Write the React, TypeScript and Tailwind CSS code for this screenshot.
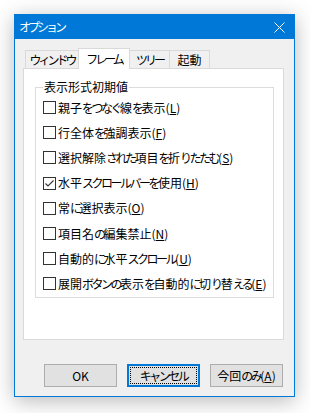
import React from "react";

type Option = {
  label: string;
  key: string;
  checked?: boolean;
};

const options: Option[] = [
  { label: "親子をつなぐ線を表示", key: "L" },
  { label: "行全体を強調表示", key: "F" },
  { label: "選択解除された項目を折りたたむ", key: "S" },
  { label: "水平スクロールバーを使用", key: "H", checked: true },
  { label: "常に選択表示", key: "O" },
  { label: "項目名の編集禁止", key: "N" },
  { label: "自動的に水平スクロール", key: "U" },
  { label: "展開ボタンの表示を自動的に切り替える", key: "E" },
];

const tabs = [
  { label: "ウィンドウ", w: "w-[54px]" },
  { label: "フレーム", w: "w-[52px]", active: true },
  { label: "ツリー", w: "w-[41px]" },
  { label: "起動", w: "w-[41px]" },
];

// kana are narrower in the UI font of the screenshot, squeeze them a bit
function Jp({ text, tight }: { text: string; tight?: boolean }) {
  const parts = text.split(/([\u3040-\u30ff]+)/);
  return (
    <>
      {parts.map((p, i) =>
        /[\u3040-\u30ff]/.test(p) ? (
          <span key={i} className={tight ? "tracking-[-3px]" : "tracking-[-2.5px]"}>
            {p}
          </span>
        ) : (
          <React.Fragment key={i}>{p}</React.Fragment>
        )
      )}
    </>
  );
}

function CheckBox({ checked }: { checked?: boolean }) {
  return (
    <span className="flex h-[13px] w-[13px] shrink-0 items-center justify-center border border-[#333333] bg-white">
      {checked && (
        <svg width="11" height="11" viewBox="0 0 11 11">
          <polyline points="1.5,5.5 4,8 9.5,2.5" fill="none" stroke="#3a3a3a" strokeWidth="1.2" />
        </svg>
      )}
    </span>
  );
}

function Row({ opt }: { opt: Option }) {
  return (
    <div className="flex h-[25.2px] items-center gap-[2px]">
      <CheckBox checked={opt.checked} />
      <span className="whitespace-nowrap leading-[16px]">
        <Jp text={opt.label} />(<span className="underline underline-offset-1">{opt.key}</span>)
      </span>
    </div>
  );
}

function Tabs() {
  return (
    <div className="flex h-[20px] items-end pl-[2px]">
      {tabs.map((t, i) =>
        t.active ? (
          <div
            key={i}
            className={`${t.w} relative z-10 -mb-px -ml-px flex h-[21px] items-center justify-center whitespace-nowrap border border-b-0 border-[#d9d9d9] bg-white`}
          >
            <span>
              <Jp text={t.label} tight />
            </span>
          </div>
        ) : (
          <div
            key={i}
            className={`${t.w} -ml-px flex h-[18px] items-center justify-center whitespace-nowrap border border-b-0 border-[#d9d9d9] bg-[#f0f0f0] first:ml-0`}
          >
            <span>
              <Jp text={t.label} tight />
            </span>
          </div>
        )
      )}
    </div>
  );
}

function Button({ children, primary }: { children: React.ReactNode; primary?: boolean }) {
  if (primary) {
    return (
      <button className="flex h-[23px] w-[73px] items-center justify-center border-2 border-[#0078d7] bg-[#e1e1e1] p-px">
        <span className="flex h-full w-full items-center justify-center outline-1 outline-dotted outline-black -outline-offset-1">
          <span>{children}</span>
        </span>
      </button>
    );
  }
  return (
    <button className="flex h-[23px] w-[73px] items-center justify-center border border-[#adadad] bg-[#e1e1e1]">
      <span>{children}</span>
    </button>
  );
}

export default function App() {
  return (
    <div
      className="h-[413px] w-[310px] overflow-hidden bg-white pl-[14px] pt-[14px] text-[12px] text-black"
      style={{ fontFamily: '"Noto Sans CJK JP", "Noto Sans", sans-serif' }}
    >
      <div className="flex h-[383px] w-[281px] flex-col border border-[#0078d7] bg-[#f0f0f0] shadow-[0_4px_20px_rgba(0,0,0,0.28)]">
        <div className="flex h-[24px] shrink-0 items-center justify-between bg-[#0078d7] pl-[4px] pr-[9px] text-white">
          <span className="leading-[16px]">
            <Jp text="オプション" tight />
          </span>
          <svg width="11" height="11" viewBox="0 0 11 11" className="mt-[1px]">
            <path d="M0.5 0.5 L10.5 10.5 M10.5 0.5 L0.5 10.5" stroke="white" strokeWidth="1" />
          </svg>
        </div>

        <div className="flex flex-1 flex-col pl-[8px] pr-[10px] pt-[9px]">
          <Tabs />
          <div className="h-[272px] border border-[#d9d9d9] bg-white pt-[10px]">
            <fieldset className="ml-[11px] w-[239px] border border-[#dcdcdc] pb-0 pl-[7px]">
              <legend className="px-px leading-[16px]">表示形式初期値</legend>
              {options.map((o, i) => (
                <Row key={i} opt={o} />
              ))}
            </fieldset>
          </div>

          <div className="mt-[24px] flex justify-end gap-[10px] pr-px">
            <Button>OK</Button>
            <Button primary>
              <Jp text="キャンセル" />
            </Button>
            <Button>
              今回<Jp text="のみ" />(<span className="underline underline-offset-1">A</span>)
            </Button>
          </div>
        </div>
      </div>
    </div>
  );
}
